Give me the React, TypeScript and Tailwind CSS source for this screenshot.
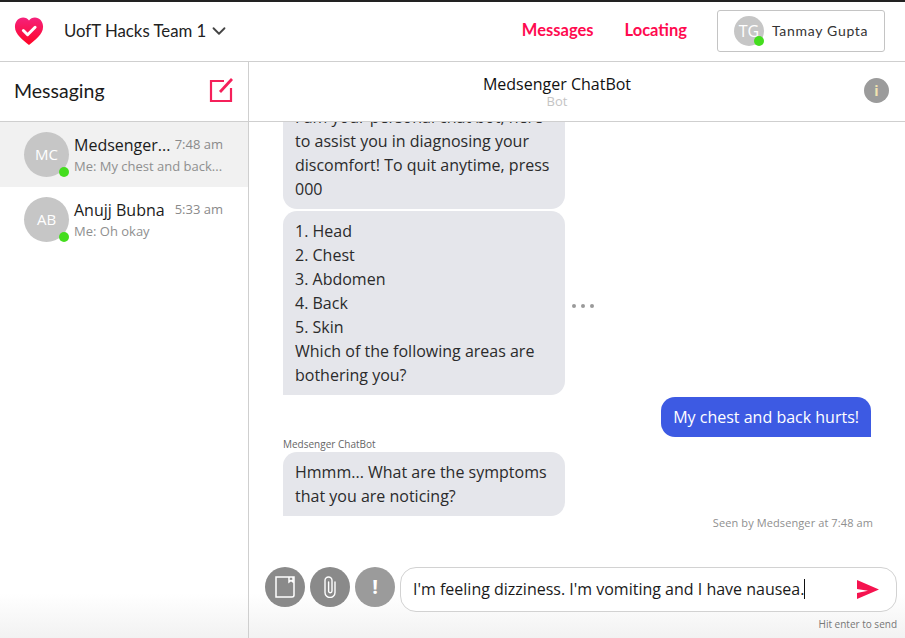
import type { ReactNode } from "react";
import { ChevronDown } from "lucide-react";

const sans = "font-['Open_Sans',sans-serif]";
const nun = "font-['Lato',sans-serif]";

function Avatar({ initials, size }: { initials: string; size: string }) {
  return (
    <div className={`relative ${size} shrink-0 rounded-full bg-[#c6c6c6] flex items-center justify-center text-white`}>
      {initials}
      <span className="absolute right-0 bottom-0 w-[10px] h-[10px] rounded-full bg-[#44dd1e]" />
    </div>
  );
}

function Logo() {
  return (
    <svg className="mb-[2px]" width="30" height="30" viewBox="0 0 32 32">
      <defs>
        <linearGradient id="heart" x1="0" y1="0" x2="0" y2="1">
          <stop offset="0" stopColor="#f5217c" />
          <stop offset="1" stopColor="#ff0525" />
        </linearGradient>
      </defs>
      <path
        d="M16 31C10 26 1 20 1 11.5 1 5.5 5 1.5 9.7 1.5c2.7 0 4.9 1.2 6.3 3.3 1.4-2.1 3.6-3.3 6.3-3.3C27 1.5 31 5.5 31 11.5 31 20 22 26 16 31z"
        fill="url(#heart)"
      />
      <path d="M10 15.5l4.5 4.5 8-8" fill="none" stroke="#fff" strokeWidth="3.2" strokeLinecap="round" strokeLinejoin="round" />
    </svg>
  );
}

function Thread({ initials, name, time, preview, active }: { initials: string; name: string; time: string; preview: string; active?: boolean }) {
  return (
    <div className={`flex items-center h-[65px] pl-6 pr-[25px] gap-[5px] ${active ? "bg-[#f1f1f1]" : ""}`}>
      <Avatar initials={initials} size="w-[45px] h-[45px] text-[15px]" />
      <div className="flex-1 min-w-0">
        <div className="flex justify-between items-center">
          <span className="text-[16px] leading-[22px] text-[#1b1b1b]">{name}</span>
          <span className="text-[13px] text-[#8a8a8a]">{time}</span>
        </div>
        <div className="text-[13px] leading-[20px] text-[#8f8f8f]">{preview}</div>
      </div>
    </div>
  );
}

function BotBubble({ lines, square }: { lines: string[]; square?: boolean }) {
  return (
    <div className={`w-[282px] bg-[#e5e6eb] rounded-[14px] ${square ? "rounded-bl-none" : ""} px-3 py-2 text-[16px] leading-[24px] text-[#2b2b2b]`}>
      {lines.map((l) => (
        <div key={l}>{l}</div>
      ))}
    </div>
  );
}

function RoundButton({ children, light }: { children: ReactNode; light?: boolean }) {
  return (
    <div className={`w-10 h-10 shrink-0 rounded-full flex items-center justify-center text-white ${light ? "bg-[#9b9b9b]" : "bg-[#8a8a8a]"}`}>
      {children}
    </div>
  );
}

export default function App() {
  return (
    <div className={`w-[905px] h-[638px] overflow-hidden flex flex-col bg-gradient-to-b from-white from-[93%] to-[#f2f2f2] border-t-2 border-[#222] ${sans}`}>
      <header className="h-[60px] shrink-0 flex items-center border-b border-[#cfcfcf] pl-[14px] pr-5">
        <Logo />
        <span className={`ml-5 mb-[2px] text-[16.8px] text-[#222] ${nun}`}>UofT Hacks Team 1</span>
        <ChevronDown className="ml-[2px] mb-[2px] text-[#444]" size={22} strokeWidth={2} />
        <nav className={`ml-auto mb-[2px] flex items-center gap-[31px] text-[16.5px] font-bold text-[#ff0a50] ${nun}`}>
          <span>Messages</span>
          <span>Locating</span>
        </nav>
        <div className="ml-[30px] mb-px w-[168px] h-[42px] rounded-[3px] border border-[#c4c4c4] flex items-center pl-4 gap-2">
          <Avatar initials="TG" size="w-[30px] h-[30px] text-[16px]" />
          <span className={`mb-[2px] text-[14px] tracking-[0.7px] text-[#333] ${nun}`}>Tanmay Gupta</span>
        </div>
      </header>
      <div className="flex-1 flex min-h-0">
        <aside className="w-[249px] shrink-0 border-r border-[#cfcfcf] flex flex-col">
          <div className="h-[60px] shrink-0 flex items-center justify-between border-b border-[#cfcfcf] pl-[14px] pr-[15px]">
            <span className={`mb-[2px] text-[19.5px] text-[#1b1b1b] ${nun}`}>Messaging</span>
            <svg className="mb-[3px]" width="24" height="24" viewBox="0 0 24 24" fill="none" stroke="#f5205a" strokeWidth="2.2">
              <path d="M15 3H2v20h20V10" />
              <path d="M11 14L23 1" strokeWidth="2.8" />
            </svg>
          </div>
          <Thread active initials="MC" name="Medsenger..." time="7:48 am" preview="Me: My chest and back..." />
          <Thread initials="AB" name="Anujj Bubna" time="5:33 am" preview="Me: Oh okay" />
        </aside>
        <main className="flex-1 min-w-0 flex flex-col">
          <div className="relative z-10 h-[60px] shrink-0 border-b border-[#cfcfcf] bg-white flex flex-col items-center pt-3 pr-10">
            <div className="text-[16px] leading-[21px] text-[#111]">Medsenger ChatBot</div>
            <div className="text-[13px] leading-[12px] text-[#c4c4c4]">Bot</div>
            <div className="absolute right-4 top-4 w-[25px] h-[25px] rounded-full bg-[#9b9b9b] flex items-center justify-center text-[#f3e3b0] text-[14px] font-bold">i</div>
          </div>
          <div className="h-[408px] shrink-0 overflow-hidden flex flex-col justify-end px-[34px]">
            <div className="flex flex-col gap-[2px]">
              <BotBubble lines={["I am your personal chat bot, here", "to assist you in diagnosing your", "discomfort! To quit anytime, press", "000"]} />
              <div className="flex items-center">
                <BotBubble square lines={["1. Head", "2. Chest", "3. Abdomen", "4. Back", "5. Skin", "Which of the following areas are", "bothering you?"]} />
                <div className="ml-[7px] mt-[5px] flex gap-[5px]">
                  <span className="w-1 h-1 rounded-full bg-[#9a9a9a]" />
                  <span className="w-1 h-1 rounded-full bg-[#9a9a9a]" />
                  <span className="w-1 h-1 rounded-full bg-[#9a9a9a]" />
                </div>
              </div>
              <div className="self-end bg-[#3d5ae3] text-white rounded-[14px] rounded-br-none px-3 py-2 text-[16px] leading-[24px]">My chest and back hurts!</div>
            </div>
            <div className="text-[10px] leading-[14px] text-[#666]">Medsenger ChatBot</div>
            <div className="mt-px">
              <BotBubble square lines={["Hmmm... What are the symptoms", "that you are noticing?"]} />
            </div>
            <div className="h-[14px] -mr-[2px] text-right text-[11px] leading-[14px] tracking-[0.1px] text-[#8f8f8f]">Seen by Medsenger at 7:48 am</div>
          </div>
          <div className="mt-[37px] flex items-start pl-4 pr-2 gap-[5px]">
            <RoundButton>
              <svg width="20" height="22" viewBox="0 0 20 22" fill="none" stroke="#fff" strokeWidth="1.5">
                <path d="M1 1h18v18a2 2 0 0 1-2 2H1z" />
                <path d="M14 1v5l2-1.500L18 6V1" />
              </svg>
            </RoundButton>
            <RoundButton>
              <svg width="12" height="22" viewBox="0 0 12 22" fill="none" stroke="#fff" strokeWidth="1.4" strokeLinecap="round">
                <path d="M11 6v10.500a5 5 0 0 1-10 0V4.500a3.500 3.500 0 0 1 7 0V15a1.700 1.700 0 0 1-3.400 0V6" />
              </svg>
            </RoundButton>
            <RoundButton light>
              <span className="text-[20px] font-bold">!</span>
            </RoundButton>
            <div className="flex-1 h-[45px] rounded-[16px] border border-[#d2d2d2] bg-white flex items-center pl-3 pr-[17px] pb-px text-[16px] text-[#1a1a1a]">
              <span>I'm feeling dizziness. I'm vomiting and I have nausea.</span>
              <span className="w-px h-5 bg-[#111]" />
              <svg className="ml-auto" width="22" height="19" viewBox="0 0 22 19" fill="#f5134f">
                <path d="M0 0L22 9.500 0 19V13L11 10.800 0 9z" />
              </svg>
            </div>
          </div>
          <div className="mt-[5px] text-right pr-2 text-[10px] leading-[14px] text-[#777]">Hit enter to send</div>
        </main>
      </div>
    </div>
  );
}
